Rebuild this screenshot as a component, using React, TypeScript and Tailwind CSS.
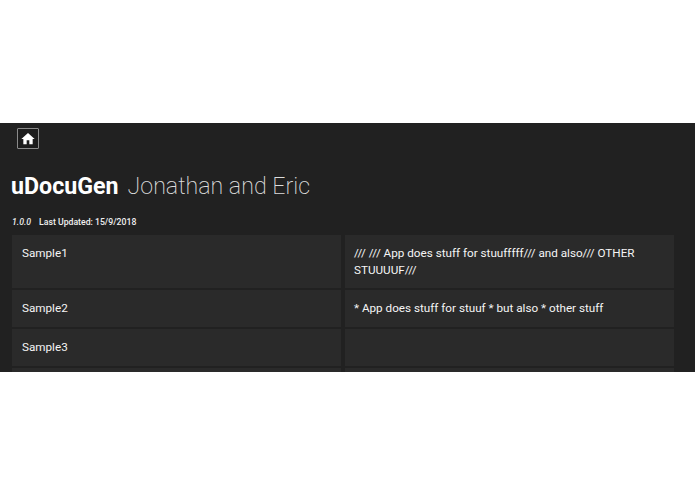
const rows = [
  {
    name: "Sample1",
    text: "/// /// App does stuff for stuufffff/// and also/// OTHER STUUUUF///",
    height: "h-[53px]",
  },
  {
    name: "Sample2",
    text: "* App does stuff for stuuf * but also * other stuff",
    height: "h-[37px]",
  },
  { name: "Sample3", text: "", height: "h-[37px]" },
  { name: "", text: "", height: "h-[37px]" },
];

export default function App() {
  return (
    <div className="h-[494px] w-[695px] overflow-hidden bg-white font-['Roboto',sans-serif]">
      <div className="mt-[123px] h-[249px] overflow-hidden bg-[#212121] text-white">
        {/* Home button */}
        <div className="pl-[17px] pt-[5px]">
          <div className="flex h-[21px] w-[22px] items-center justify-center rounded-[1px] border border-[#8a8a8a] bg-[#1c1c1c]">
            <svg viewBox="0 0 24 24" className="h-[16px] w-[16px] fill-white">
              <path d="M10 20v-6h4v6h5v-8h3L12 3 2 12h3v8z" />
            </svg>
          </div>
        </div>

        {/* Title */}
        <h1 className="mt-[21px] pl-[11px] text-[23.2px] leading-[32px] whitespace-nowrap">
          <span className="font-bold">uDocuGen</span>
          <span className="ml-[9px] font-extralight text-[#dcdcdc]">Jonathan and Eric</span>
        </h1>

        {/* Version line */}
        <div className="mt-[14px] pl-[12px] text-[8.7px] leading-[12px] font-medium text-[#f0f0f0]">
          <em>1.0.0</em>
          <span className="ml-[8px]">Last Updated: 15/9/2018</span>
        </div>

        {/* Samples table */}
        <div className="mt-[7px] flex flex-col gap-[2px] pl-[12px]">
          {rows.map((row, i) => (
            <div key={i} className={`flex gap-[4px] ${row.height}`}>
              <div className="w-[329px] bg-[#2a2a2a] p-[10px] text-[11.7px] leading-[17px] text-[#f5f5f5]">
                {row.name}
              </div>
              <div className="w-[329px] bg-[#2a2a2a] px-[9px] py-[10px] text-[11.7px] leading-[17px] text-[#f5f5f5]">
                {row.text}
              </div>
            </div>
          ))}
        </div>
      </div>
    </div>
  );
}
